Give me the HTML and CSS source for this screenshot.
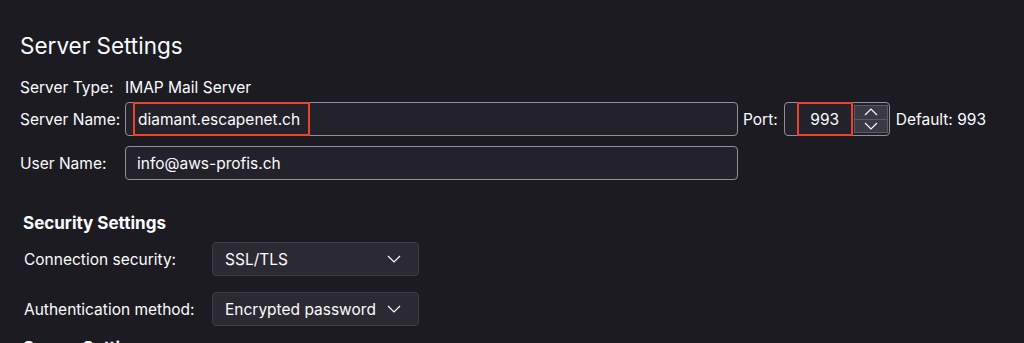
FILE: index.html
```html
<!DOCTYPE html>
<html lang="en">

<head>
  <meta charset="UTF-8" />
  <meta name="viewport" content="width=device-width, initial-scale=1.0" />
  <title>Server Settings</title>
  <link rel="stylesheet" href="styles.css">
</head>

<body>

  <h1 class="page-title">Server Settings</h1>

  <div class="server-rows">
    <div class="row type-row">
      <span class="label">Server Type:</span>
      <span class="value">IMAP Mail Server</span>
    </div>

    <div class="row">
      <span class="label">Server Name:</span>
      <div class="text-input wide">
        <span class="mark">diamant.escapenet.ch</span>
      </div>
      <span class="label port-label">Port:</span>
      <div class="port-input">
        <span class="mark port-value">993</span>
        <div class="spinner">
          <span class="spin-btn">
            <svg width="14" height="8" viewBox="0 0 14 8"><path d="M1 7 L7 1 L13 7" fill="none" stroke="#fbfbfe" stroke-width="1.2"/></svg>
          </span>
          <span class="spin-btn">
            <svg width="14" height="8" viewBox="0 0 14 8"><path d="M1 1 L7 7 L13 1" fill="none" stroke="#fbfbfe" stroke-width="1.2"/></svg>
          </span>
        </div>
      </div>
      <span class="label">Default: 993</span>
    </div>

    <div class="row">
      <span class="label">User Name:</span>
      <div class="text-input wide">
        <span class="plain">info@aws-profis.ch</span>
      </div>
    </div>
  </div>

  <h2 class="section-title">Security Settings</h2>

  <div class="security-grid">
    <span class="label">Connection security:</span>
    <div class="select-box">
      <span>SSL/TLS</span>
      <svg width="14" height="8" viewBox="0 0 14 8"><path d="M1 1 L7 7 L13 1" fill="none" stroke="#fbfbfe" stroke-width="1.2"/></svg>
    </div>

    <span class="label">Authentication method:</span>
    <div class="select-box">
      <span>Encrypted password</span>
      <svg width="14" height="8" viewBox="0 0 14 8"><path d="M1 1 L7 7 L13 1" fill="none" stroke="#fbfbfe" stroke-width="1.2"/></svg>
    </div>
  </div>

  <h2 class="section-title next">Server Settings</h2>

</body>

</html>
```

FILE: styles.css
```css
/* page */
body {
  margin: 0;
  padding: 0 20px;
  background-color: #1c1b22;
  color: #fbfbfe;
  font-family: Inter, "Noto Sans", sans-serif;
  font-size: 15.5px;
  overflow: hidden;
  height: 343px;
}

.page-title {
  margin: 0;
  padding-top: 32px;
  font-size: 22.5px;
  font-weight: 400;
  line-height: 28px;
}

/* server rows */
.server-rows {
  display: flex;
  flex-direction: column;
  margin-top: 17px;
}

.row {
  display: flex;
  align-items: center;
  height: 34px;
  margin-top: 10px;
}

.type-row {
  height: 20px;
  margin-top: 0;
  margin-bottom: -5px;
}

.row > .label:first-child {
  width: 105px;
  flex-shrink: 0;
}

.label {
  white-space: nowrap;
}

.text-input {
  box-sizing: border-box;
  height: 34px;
  border: 1px solid #8f8f9d;
  border-radius: 4px;
  background-color: #23222b;
  display: flex;
  align-items: center;
}

.wide {
  width: 613px;
}

.plain {
  padding-left: 11px;
}

.mark {
  box-sizing: border-box;
  height: 34px;
  display: flex;
  align-items: center;
  border: 2px solid #e8452c;
  margin-left: 7px;
  padding: 0 8px 0 3px;
}

.port-label {
  margin-left: 5px;
  margin-right: 6px;
}

.port-input {
  box-sizing: border-box;
  height: 34px;
  width: 106px;
  border: 1px solid #8f8f9d;
  border-radius: 4px;
  background-color: #23222b;
  display: flex;
  align-items: center;
  margin-right: 6px;
}

.port-value {
  width: 56px;
  justify-content: center;
  margin-left: 12px;
  padding: 0;
}

.spinner {
  display: flex;
  flex-direction: column;
  width: 34px;
  height: 28px;
  margin-left: 1px;
}

.spin-btn {
  flex: 1;
  display: flex;
  align-items: center;
  justify-content: center;
  background-color: #3a3944;
  border: 1px solid #5b5a64;
}

.spin-btn + .spin-btn {
  border-top: none;
}

/* security */
.section-title {
  margin: 0;
  margin-top: 33px;
  padding-left: 3px;
  font-size: 17px;
  font-weight: 700;
  line-height: 20px;
}

.security-grid {
  display: grid;
  grid-template-columns: 188px 207px;
  grid-template-rows: 34px 34px;
  row-gap: 16px;
  align-items: center;
  margin-top: 9px;
  padding-left: 4px;
}

.select-box {
  box-sizing: border-box;
  height: 34px;
  border: 1px solid #3e3d47;
  border-radius: 4px;
  background-color: #2b2a33;
  display: flex;
  align-items: center;
  justify-content: space-between;
  padding: 0 17px 0 12px;
}

.section-title.next {
  margin-top: 12px;
}
```
